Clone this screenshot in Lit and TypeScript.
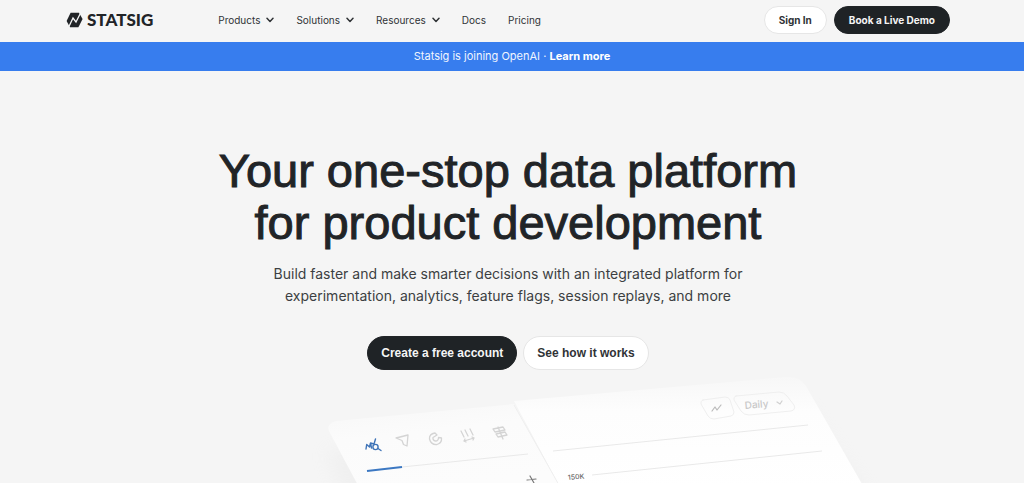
import { LitElement, html, css, svg } from "lit";
import { customElement } from "lit/decorators.js";

interface NavItem {
  label: string;
  menu: boolean;
}

const NAV: NavItem[] = [
  { label: "Products", menu: true },
  { label: "Solutions", menu: true },
  { label: "Resources", menu: true },
  { label: "Docs", menu: false },
  { label: "Pricing", menu: false },
];

@customElement("product-preview")
export class ProductPreview extends LitElement {
  static styles = css`
    :host {
      display: flex;
      justify-content: center;
      overflow: hidden;
    }
    .scene {
      flex: none;
      width: 1024px;
      height: 115px;
    }
    .label {
      font-family: Inter, "Liberation Sans", sans-serif;
      font-weight: 500;
    }
  `;

  render() {
    return html`
      <svg class="scene" viewBox="0 369 1024 115" role="img" aria-label="Metrics explorer preview">
        <defs>
          <linearGradient id="sheet" x1="0" y1="0" x2="0.3" y2="1">
            <stop offset="0" stop-color="#f7f7f7" />
            <stop offset="0.4" stop-color="#fbfbfb" />
            <stop offset="1" stop-color="#fcfcfc" />
          </linearGradient>
          <linearGradient id="page" x1="0" y1="0" x2="0" y2="1">
            <stop offset="0" stop-color="#f7f7f7" />
            <stop offset="0.3" stop-color="#fdfdfd" />
            <stop offset="1" stop-color="#ffffff" />
          </linearGradient>
          <filter id="soft" x="-20%" y="-40%" width="140%" height="180%">
            <feGaussianBlur stdDeviation="9" />
          </filter>
        </defs>
        <path d="M326 450L800 400L872 500H345Z" fill="#dcdcdc" opacity="0.2" filter="url(#soft)" />
        <path d="M336 420L514 403L562 490H361L329 430Q326 423 336 420Z" fill="url(#sheet)" />
        <path d="M514 400L786 376Q800 375 806 385L866 490H562Z" fill="url(#page)" />
        <path d="M514 404L559 484" fill="none" stroke="#efefef" />

        <path d="M402 466L528 453" stroke="#e9e9e9" />
        <path d="M367 470L402 466" stroke="#3c78c2" stroke-width="2" />
        <path d="M553 450L808 424M592 474L822 450" fill="none" stroke="#e9e9e9" />

        ${svg`
          <g fill="none" stroke-linecap="round" stroke-linejoin="round">
            <g stroke="#3f74b8" stroke-width="1.4">
              <path d="M366 448L366.7 443.5L369.5 446L370.5 442L371.5 447M370.5 442L374 443L375.5 438" />
              <circle cx="375.5" cy="446" r="2.6" />
              <path d="M378 447.5L381 449.5" />
            </g>
            <g stroke="#d4d4d4" stroke-width="1.3">
              <path d="M396 437L408 434L407 445L403.5 443.5L402 439.5Z" />
              <path d="M435 432Q429 433 429.5 438Q431 444 437 443.5Q442 442 441.5 437L438.5 436.5Q438.5 440 435.5 440Q432.5 439.5 433 436.5L437 434Z" />
              <path d="M461 430L464 436M465 429L468 435M470 428L473 434M464 440L474 437M465 438L464 440L466 441M472 436L474 437L473 439" />
              <path d="M493 428L503 426L505 429L495 431ZM496 433L505 431L507 434L498 436ZM498 426L503 438" />
            </g>
            <path d="M527 479L536 478M530 475L534 482" stroke="#777777" stroke-width="1.2" />
            <path d="M703 399L725 396Q729 396 730 399L734 411Q734 414 731 415L714 418Q710 418 708 415L701 403Q700 400 703 399Z" stroke="#efefef" />
            <path d="M736 395L779 391Q784 391 787 395L794 404Q796 409 791 410L749 414Q744 414 741 410L734 399Q733 396 736 395Z" stroke="#efefef" />
            <path d="M712 410L715 406L717 409L721 404" stroke="#bababa" stroke-width="1.2" />
            <path d="M777 401L780 403L782 400" stroke="#d0d0d0" stroke-width="1.2" />
          </g>
          <text class="label" font-size="10" fill="#c8c8c8" transform="translate(745 408) rotate(-5)">Daily</text>
          <text class="label" font-size="7" fill="#666666" transform="translate(568 479) rotate(-5)">150K</text>
        `}
      </svg>
    `;
  }
}

@customElement("app-root")
export class AppRoot extends LitElement {
  static styles = css`
    :host {
      display: flex;
      flex-direction: column;
      min-height: 100vh;
      background: #f5f5f5;
      color: #212427;
      font-family: Inter, "Liberation Sans", sans-serif;
    }
    a {
      color: inherit;
      text-decoration: none;
    }
    button {
      font: inherit;
      color: inherit;
      border: 0;
      padding: 0;
      background: none;
      cursor: pointer;
    }
    .header {
      display: flex;
      align-items: center;
      gap: 65px;
      padding: 6px 74px 8px 66px;
    }
    .brand {
      display: flex;
      align-items: center;
      gap: 4px;
      font-family: Lato, sans-serif;
      font-size: 17px;
      line-height: 20px;
      font-weight: 900;
    }
    .mark {
      width: 17px;
      height: 16px;
    }
    .nav {
      display: flex;
      flex: 1;
      gap: 22px;
      font-size: 10px;
      line-height: 16px;
      color: #303336;
    }
    .item {
      display: flex;
      align-items: center;
      gap: 6px;
    }
    .chevron {
      width: 8px;
      height: 6px;
    }
    .actions {
      display: flex;
      gap: 7px;
    }
    .pill {
      box-sizing: border-box;
      border: 1px solid #212427;
      border-radius: 24px;
      background: #1f2326;
      color: #f5f5f5;
      font-weight: 700;
      white-space: nowrap;
    }
    .light {
      border-color: #e6e6e6;
      background: #ffffff;
      color: #303336;
    }
    .small {
      padding: 5px 14px;
      font-size: 10px;
      line-height: 16px;
    }
    .large {
      padding: 7px 13px;
      font-family: "Liberation Sans", Arial, sans-serif;
      font-size: 12px;
      line-height: 18px;
    }
    .banner {
      padding: 6px 16px 7px;
      background: #377dee;
      color: #f0f5fe;
      font-size: 11px;
      line-height: 16px;
      text-align: center;
    }
    .banner a {
      color: #ffffff;
      font-weight: 700;
    }
    .hero {
      display: flex;
      flex-direction: column;
      align-items: center;
      padding: 74px 24px 0 16px;
      text-align: center;
    }
    .title {
      margin: 0;
      max-width: 640px;
      font-family: "Liberation Sans", Arial, sans-serif;
      font-size: 47px;
      line-height: 52px;
      font-weight: 400;
      -webkit-text-stroke: 1px currentColor;
    }
    .lead {
      margin: 14px 0 0;
      max-width: 500px;
      font-size: 14px;
      line-height: 22px;
      color: #3c3f42;
    }
    .cta {
      display: flex;
      gap: 6px;
      margin-top: 29px;
    }
  `;

  private chevron() {
    return html`<svg class="chevron" viewBox="0 0 8 6" aria-hidden="true">
      <path d="M1 1.2L4 4.4L7 1.2" fill="none" stroke="#303336" stroke-width="1.5" stroke-linecap="round" stroke-linejoin="round" />
    </svg>`;
  }

  private navItem(item: NavItem) {
    return item.menu
      ? html`<button class="item" type="button" aria-haspopup="true">${item.label}${this.chevron()}</button>`
      : html`<a class="item" href="#">${item.label}</a>`;
  }

  render() {
    return html`
      <header class="header">
        <a class="brand" href="#">
          <svg class="mark" viewBox="0 0 17 16" aria-hidden="true">
            <path d="M4.6 0.8H13L16.6 7L12.4 15.2H4L0.6 9Z" fill="#212427" />
            <path d="M2.6 15.2L7 6L10 10L14.6 1" fill="none" stroke="#f5f5f5" stroke-width="1.3" />
          </svg>
          STATSIG
        </a>
        <nav class="nav" aria-label="Main">${NAV.map((item) => this.navItem(item))}</nav>
        <div class="actions">
          <button class="pill light small" type="button">Sign In</button>
          <button class="pill small" type="button">Book a Live Demo</button>
        </div>
      </header>
      <div class="banner">Statsig is joining OpenAI · <a href="#">Learn more</a></div>
      <main>
        <section class="hero">
          <h1 class="title">Your one-stop data platform for product development</h1>
          <p class="lead">
            Build faster and make smarter decisions with an integrated platform for experimentation, analytics, feature
            flags, session replays, and more
          </p>
          <div class="cta">
            <button class="pill large" type="button">Create a free account</button>
            <button class="pill light large" type="button">See how it works</button>
          </div>
        </section>
        <product-preview></product-preview>
      </main>
    `;
  }
}
